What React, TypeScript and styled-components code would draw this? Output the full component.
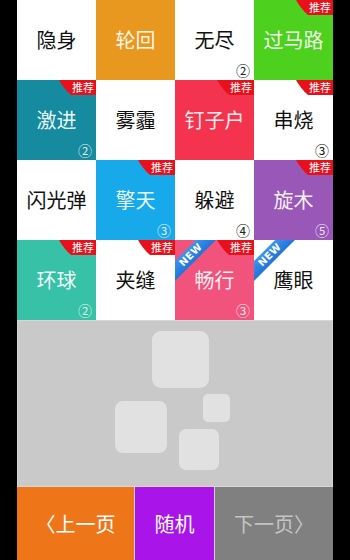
import React from "react";
import styled, { createGlobalStyle } from "styled-components";

const Global = createGlobalStyle`
  html, body { margin: 0; padding: 0; background: #000; }
  body { font-family: "Noto Sans CJK SC", "Noto Sans", sans-serif; }
`;

const Page = styled.div`
  width: 316px;
  height: 560px;
  margin: 0 auto;
  display: flex;
  flex-direction: column;
  background: #000;
`;

const Grid = styled.div`
  display: grid;
  grid-template-columns: repeat(4, 79px);
  grid-auto-rows: 80px;
`;

const Cell = styled.div<{ $bg: string; $light: boolean }>`
  position: relative;
  overflow: hidden;
  background: ${(p) => p.$bg};
  color: ${(p) => (p.$light ? "rgba(255,255,255,0.93)" : "#111")};
  display: flex;
  align-items: center;
  justify-content: center;
  font-size: 20px;
  line-height: 1;
`;

const Badge = styled.div`
  position: absolute;
  top: 0;
  right: 0;
  width: 37px;
  height: 15px;
  display: flex;
  align-items: center;
  justify-content: flex-end;
`;

const BadgeShape = styled.svg`
  position: absolute;
  inset: 0;
`;

const BadgeText = styled.span`
  position: relative;
  color: #fff;
  font-size: 11px;
  line-height: 1;
  padding-right: 2px;
`;

const Num = styled.span<{ $light: boolean }>`
  position: absolute;
  right: 4px;
  bottom: 3px;
  font-family: "Noto Sans CJK SC", sans-serif;
  font-size: 14px;
  line-height: 1;
  color: ${(p) => (p.$light ? "rgba(255,255,255,0.85)" : "#222")};
`;

const Ribbon = styled.div`
  position: absolute;
  left: -16px;
  top: 8px;
  width: 64px;
  height: 14px;
  transform: rotate(-45deg);
  background: linear-gradient(#3b95ee, #2274d8);
  color: #fff;
  font-family: "DejaVu Sans", sans-serif;
  font-weight: 700;
  font-size: 10px;
  letter-spacing: 0.5px;
  display: flex;
  align-items: center;
  justify-content: center;
`;

const Empty = styled.div`
  height: 167px;
  background: #c9c9c9;
  box-shadow: inset 0 0 0 1px #d6d6d6;
  position: relative;
`;

const EmptyArt = styled.svg`
  display: block;
`;

const Bar = styled.div`
  flex: 1;
  display: grid;
  grid-template-columns: 117px 79px 1fr;
  column-gap: 1px;
  background: #d0d0d0;
`;

const BarButton = styled.button<{ $bg: string; $fg: string }>`
  border: 0;
  margin: 0;
  padding: 0;
  background: ${(p) => p.$bg};
  color: ${(p) => p.$fg};
  font-family: "Noto Sans CJK SC", sans-serif;
  font-size: 20px;
  display: flex;
  align-items: center;
  justify-content: center;
`;

type Item = {
  t: string;
  bg?: string;
  badge?: boolean;
  num?: string;
  isNew?: boolean;
};

const items: Item[] = [
  { t: "隐身" },
  { t: "轮回", bg: "#e8981e" },
  { t: "无尽", num: "②" },
  { t: "过马路", bg: "#4ed01f", badge: true },
  { t: "激进", bg: "#168b9f", badge: true, num: "②" },
  { t: "雾霾" },
  { t: "钉子户", bg: "#f4344f", badge: true },
  { t: "串烧", badge: true, num: "③" },
  { t: "闪光弹" },
  { t: "擎天", bg: "#18a9ea", badge: true, num: "③" },
  { t: "躲避", num: "④" },
  { t: "旋木", bg: "#9957b8", badge: true, num: "⑤" },
  { t: "环球", bg: "#37c1a7", badge: true, num: "②" },
  { t: "夹缝", badge: true },
  { t: "畅行", bg: "#f2537d", badge: true, num: "③", isNew: true },
  { t: "鹰眼", isNew: true },
];

export default function App() {
  return (
    <>
      <Global />
      <Page>
        <Grid>
          {items.map((it) => {
            const light = !!it.bg;
            return (
              <Cell key={it.t} $bg={it.bg ?? "#fff"} $light={light}>
                {it.t}
                {it.badge && (
                  <Badge>
                    <BadgeShape width="37" height="15" viewBox="0 0 37 15">
                      <path d="M0 0 H37 V15 H12 Q5 9 0 0 Z" fill="#e8101a" />
                    </BadgeShape>
                    <BadgeText>推荐</BadgeText>
                  </Badge>
                )}
                {it.num && <Num $light={light}>{it.num}</Num>}
                {it.isNew && <Ribbon>NEW</Ribbon>}
              </Cell>
            );
          })}
        </Grid>
        <Empty>
          <EmptyArt width="316" height="167" viewBox="0 0 316 167">
            <g fill="#e1e1e1">
              <rect x="135" y="11" width="57" height="57" rx="9" />
              <rect x="186" y="74" width="27" height="28" rx="5" />
              <rect x="98" y="81" width="52" height="52" rx="8" />
              <rect x="162" y="109" width="40" height="41" rx="7" />
            </g>
          </EmptyArt>
        </Empty>
        <Bar>
          <BarButton $bg="#ee7518" $fg="#fff">〈上一页</BarButton>
          <BarButton $bg="#a915e8" $fg="#fff">随机</BarButton>
          <BarButton $bg="#808080" $fg="#c4c4c4">下一页〉</BarButton>
        </Bar>
      </Page>
    </>
  );
}
